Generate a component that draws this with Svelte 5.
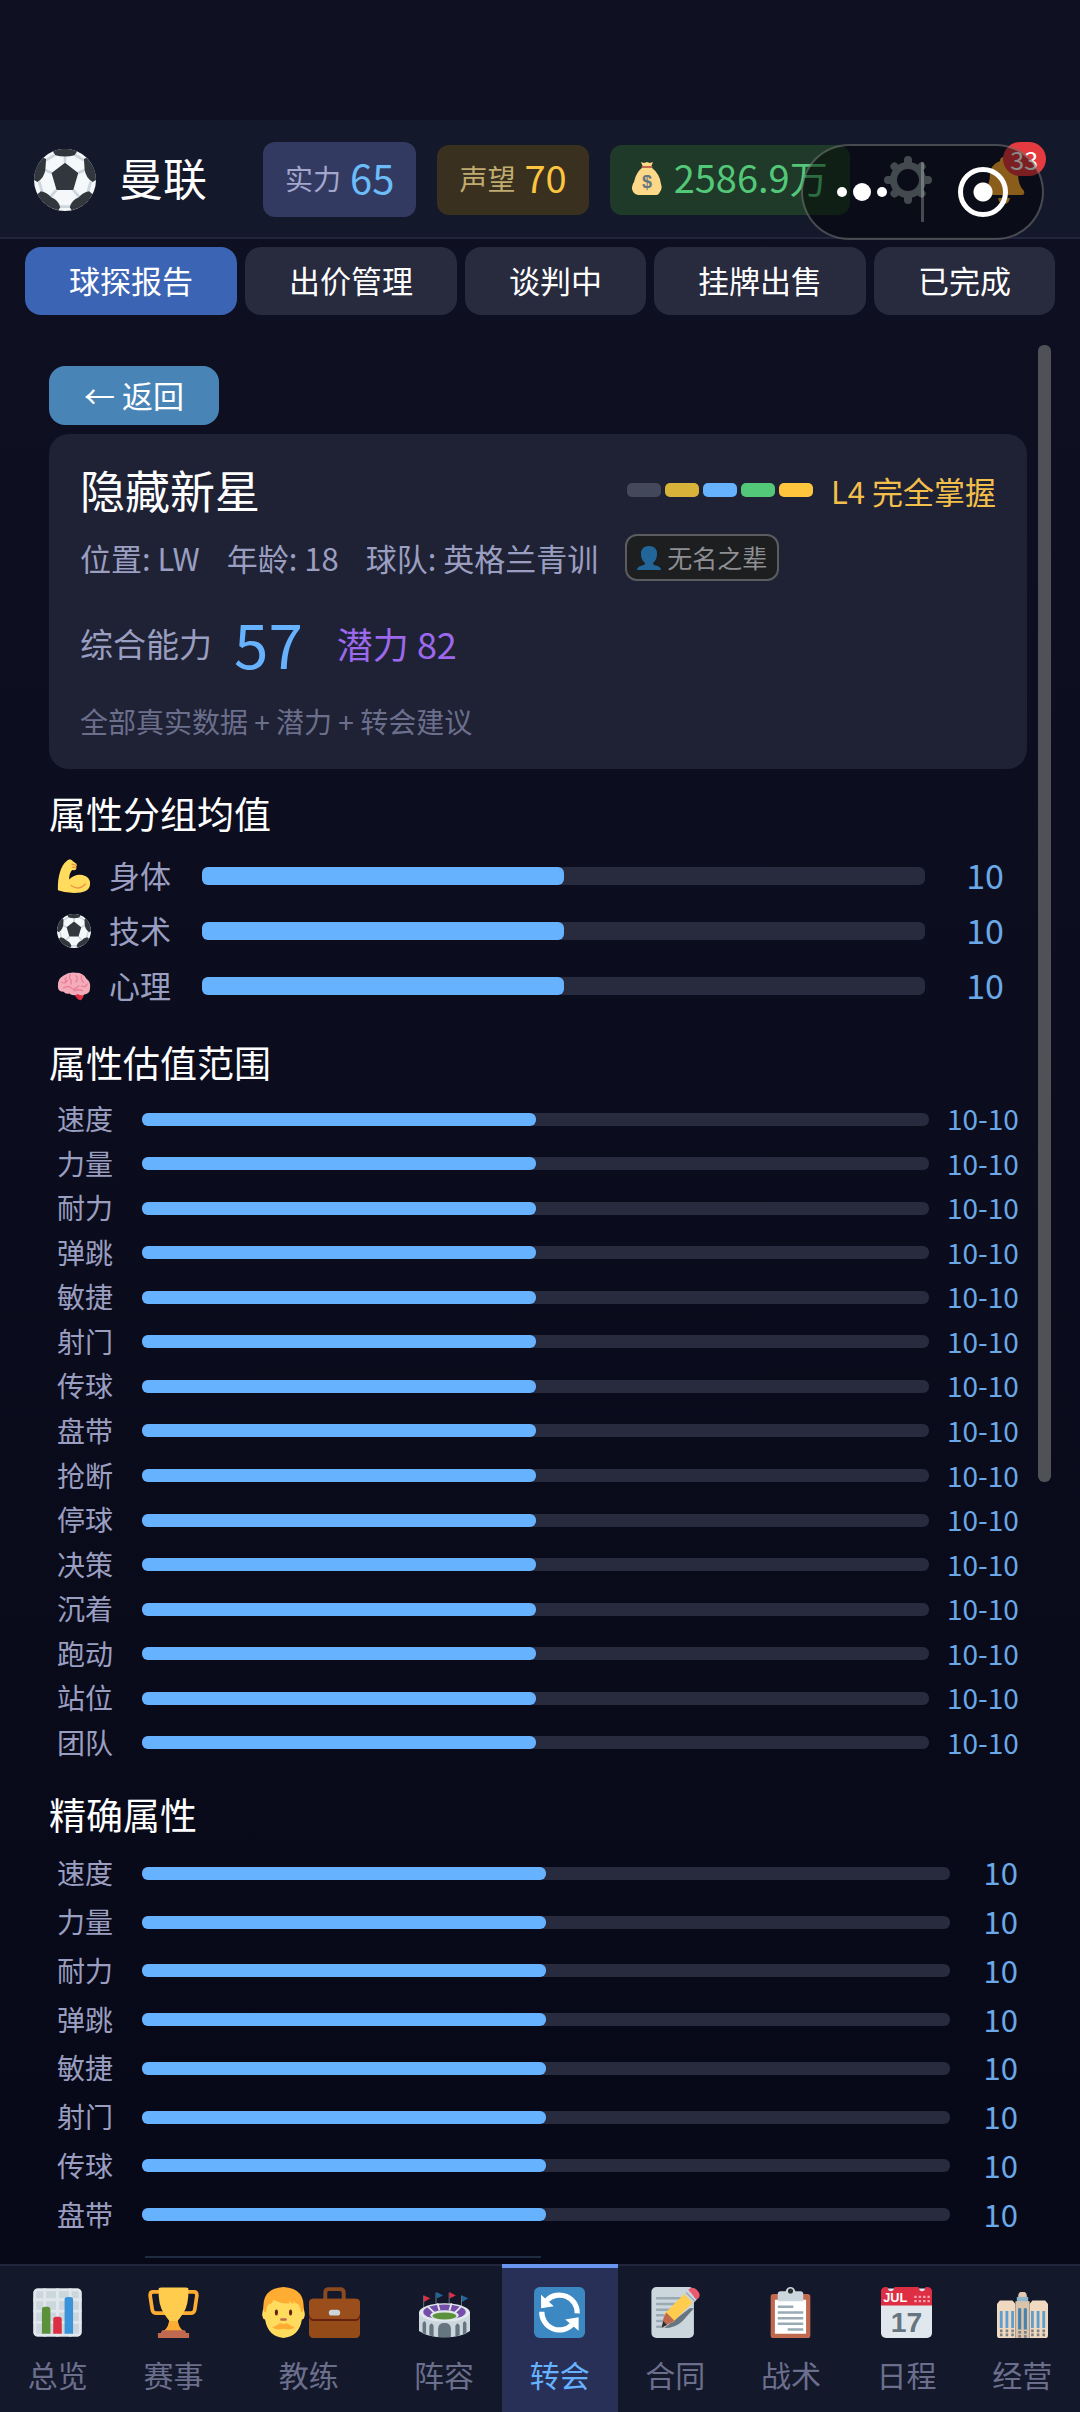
<script lang="ts">
  type IconName =
    | 'ball'
    | 'muscle'
    | 'brain'
    | 'chart'
    | 'trophy'
    | 'man'
    | 'briefcase'
    | 'stadium'
    | 'refresh'
    | 'memo'
    | 'clipboard'
    | 'calendar'
    | 'building';

  const tabs = ['球探报告', '出价管理', '谈判中', '挂牌出售', '已完成'];
  let activeTab = $state('球探报告');

  const levels = ['#43485a', '#d9b23a', '#66b2ff', '#52c878', '#ffc53d'];

  const groups: { icon: IconName; name: string; value: number }[] = [
    { icon: 'muscle', name: '身体', value: 10 },
    { icon: 'ball', name: '技术', value: 10 },
    { icon: 'brain', name: '心理', value: 10 }
  ];

  const attributes = [
    '速度', '力量', '耐力', '弹跳', '敏捷', '射门', '传球', '盘带',
    '抢断', '停球', '决策', '沉着', '跑动', '站位', '团队'
  ];
  const ranges = attributes.map((name) => ({ name, low: 10, high: 10 }));
  const exact = attributes.slice(0, 8).map((name) => ({ name, value: 10 }));

  const nav: { label: string; icons: IconName[] }[] = [
    { label: '总览', icons: ['chart'] },
    { label: '赛事', icons: ['trophy'] },
    { label: '教练', icons: ['man', 'briefcase'] },
    { label: '阵容', icons: ['stadium'] },
    { label: '转会', icons: ['refresh'] },
    { label: '合同', icons: ['memo'] },
    { label: '战术', icons: ['clipboard'] },
    { label: '日程', icons: ['calendar'] },
    { label: '经营', icons: ['building'] }
  ];
  let activeNav = $state('转会');

  const MAX = 20;
  const pct = (v: number) => (v / MAX) * 100;
</script>

{#snippet icon(name: IconName)}
  <svg class="icon" viewBox="0 0 36 36" aria-hidden="true">
    {#if name === 'ball'}
      <circle cx="18" cy="18" r="18" fill="#f5f8fa" />
      <path
        d="M18 8V4M25.6 14l4.2-2M22.800 23.800l3.500 4.200M13 23.800l-3.500 4.200M10.300 14l-4.200-2M13.500 33.500h9M33 19l-1.800 6M3 19l1.800 6M24 3.500l5 3M12 3.500l-5 3"
        stroke="#ccd6dd"
        stroke-width="1.600"
        fill="none"
      />
      <g fill="#31373d">
        <path d="M18 8l7.700 5.900-2.900 9.900H13.100L10.200 13.900z" />
        <path d="M11 1.400A18 18 0 0125 1.400L23.600 3.600Q18 5.200 12.400 3.600z" />
        <path d="M29 5.800l1.500-.7A18 18 0 0136 18l-2 1.200q-4-2.700-4.600-7.200z" />
        <path d="M7 5.800l-1.500-.7A18 18 0 000 18l2 1.200q4-2.700 4.600-7.200z" />
        <path d="M32 24.500l2 1.800A18 18 0 0121.800 35.600l-1-1.800q.8-4 5.200-5.800 2.500-3 6-3.500z" />
        <path d="M4 24.500l-2 1.800A18 18 0 0014.200 35.600l1-1.800q-.8-4-5.200-5.800-2.500-3-6-3.500z" />
      </g>
    {:else if name === 'muscle'}
      <path
        d="M1 33C.5 22 3 8 10 2.500 12-.2 15-.2 16.500 2l4 3q1 2-.5 3.500l.5 2q-1 1.600-4.500 1.200-3 3.300-3.300 10Q19 15.500 27 17q8.500 2 8 10-.8 9-17 9-9 0-17-3z"
        fill="#ffdc5d"
      />
      <path d="M15 28q8 6 15-1.500M16 5.500l4 1M16.500 8.800l3.500.2" stroke="#ef9645" stroke-width="1.500" fill="none" stroke-linecap="round" />
    {:else if name === 'brain'}
      <path d="M18 26q4-3 11-1-1 7-4 8-4 0-7-7z" fill="#dd2e44" />
      <path
        d="M1 19Q0 11 7 7 13 2.500 20 4q8 0 11 6 5 4 4 10 0 6-6 7-4 2-7-.5-5 3-9-.5-4 1-6-2-6 0-6-5z"
        fill="#f4abba"
      />
      <path
        d="M5 14q4 2 6-2M14 6q-2 4 1 6v4M20 7q3 3 0 7M26 7q-1 4 2 7M7 20q5-3 8 0t8-2M18 23q5-2 9 0M26 18q4 2 6-2M10 9q-2 1-1 4"
        stroke="#ea7f9a"
        stroke-width="1.400"
        fill="none"
        stroke-linecap="round"
      />
    {:else if name === 'chart'}
      <rect x="1" y="1" width="34" height="34" rx="3" fill="#ccd6dd" />
      <path d="M1 9h34M1 17h34M1 25h34M9 1v34M18 1v34M27 1v34" stroke="#e1e8ed" stroke-width="2" />
      <rect x="2" y="2" width="32" height="32" rx="2" fill="none" stroke="#e1e8ed" stroke-width="2" />
      <path d="M7 33V16q0-2 2-2h2q2 0 2 2v17z" fill="#5c913b" />
      <path d="M15 33V23q0-2 2-2h2q2 0 2 2v10z" fill="#dd2e44" />
      <path d="M23 33V9q0-2 2-2h2q2 0 2 2v24z" fill="#3b94d9" />
    {:else if name === 'trophy'}
      <path d="M9 3.500H3.500q-2 0-2 2.500L3 16q.4 2.500 3 2.500h6M27 3.500h5.500q2 0 2 2.500L33 16q-.4 2.500-3 2.500h-6" stroke="#ffac33" stroke-width="2.600" fill="none" />
      <path d="M15 22h6q0 6 4 9H11q4-3 4-9z" fill="#ffac33" />
      <path d="M7.500 1Q8 .3 9.500.3h17q1.500 0 2 .7.500 12-4 18-3 4.500-4 5h-5q-1-.5-4-5-4.500-6-4-18z" fill="#ffcc4d" />
      <path d="M10 30.500h16l1 2h2V36H7v-3.500h2z" fill="#c1694f" />
    {:else if name === 'man'}
      <path d="M3.500 16q-1.600 6 1.500 7 2 12 13 13 11-1 13-13 3.100-1 1.500-7L30 8H6z" fill="#ffdc5d" />
      <path d="M4 17Q2 1 18 0 34 1 32 17l-1.500 1q-1-5-2.500-6-2-.5-3-2.500.2 2-.5 2.700L22 9.500l.3 2Q16 12 11 9q-1 3-3 3-2 1-2.500 6z" fill="#ffac33" />
      <ellipse cx="13" cy="18" rx="1.100" ry="2.100" fill="#662113" />
      <ellipse cx="23" cy="18" rx="1.100" ry="2.100" fill="#662113" />
      <path d="M16.500 23h3" stroke="#c1694f" stroke-width="1.800" stroke-linecap="round" />
      <path d="M18 26.500q1.800-1.700 4 0t4 1.700q-2 2.600-8 1.300-6 1.300-8-1.300 1.800 0 4-1.700t4 0z" fill="#ffac33" />
    {:else if name === 'briefcase'}
      <path d="M11.500 9V4q0-2.500 2.500-2.500h8q2.500 0 2.500 2.500v5" stroke="#8a4b20" stroke-width="2.800" fill="none" />
      <rect y="8.300" width="36" height="27.700" rx="3" fill="#954b18" />
      <path d="M0 19v2.500q1 2.500 3 2.500h30q2 0 3-2.500V19z" fill="#662113" />
      <path d="M0 11.300q0-3 3-3h30q3 0 3 3V19q-1 3.500-3 3.500H3q-2 0-3-3.500z" fill="#9a4e1c" />
      <rect x="14" y="16" width="8" height="4.200" rx="2.100" fill="#ccd6dd" />
    {:else if name === 'stadium'}
      <path d="M3.300 6v12M12 4v10M21.300 4v10M30 6v12" stroke="#66757f" stroke-width=".7" />
      <path d="M3.500 6l4.500 2-4.500 2.500zM21.500 3.500L26 6l-4.500 2.200z" fill="#dd2e44" />
      <path d="M12.300 3.500L17 6l-4.700 2.200zM30.300 6l4.500 2-4.500 2.500z" fill="#226699" />
      <path d="M0 18v13q6 4.500 18 4.500T36 31V18z" fill="#ccd6dd" />
      <ellipse cx="18" cy="18" rx="18" ry="6.500" fill="#e1e8ed" />
      <ellipse cx="18" cy="17.600" rx="15" ry="5.300" fill="#744eaa" />
      <path d="M13 11.500l1.500 5M23 11.500l-1.500 5M6 13.500l5 5M30 13.500l-5 5" stroke="#e1e8ed" stroke-width="1.300" />
      <ellipse cx="18" cy="20" rx="10" ry="3.600" fill="#e1e8ed" />
      <ellipse cx="18" cy="20.500" rx="8.500" ry="2.500" fill="#5c913b" />
      <path
        d="M13.500 35.400v-6q0-4 4.500-4t4.500 4v6zM7.300 34.300v-7q1.500-3 3 0v7.500zM25.700 34.800v-7.500q1.500-3 3 0v7zM2.500 32.500v-7q1.500-2.500 2.500 0v8zM31 33.500v-8q1-2.500 2.500 0v7z"
        fill="#66757f"
      />
    {:else if name === 'refresh'}
      <rect width="36" height="36" rx="4" fill="#3b88c3" />
      <path d="M30.500 18.600A12.500 12.500 0 009 9.500M5.500 17.500A12.500 12.500 0 0027 26.500" stroke="#fff" stroke-width="3.700" fill="none" />
      <path d="M5 5.500v9.500l9-1.500zM31.500 30.800V21.300l-9.500 1.700z" fill="#fff" />
    {:else if name === 'memo'}
      <rect x="1" width="30" height="36" rx="3.500" fill="#ccd6dd" />
      <path d="M5 8h19M5 12h17M5 16h14M5 20h10M5 24h6M5 28h4" stroke="#99aab5" stroke-width="1.800" stroke-linecap="round" />
      <path d="M10 29q8 0 13-5l8-9-3 0z" fill="#66757f" />
      <path d="M25.500 3.500l6 6L16 25l-6-6z" fill="#ffcc4d" />
      <path d="M11.500 18l5.800 5.800L8.500 28.500 9.500 22z" fill="#c1694f" />
      <path d="M9.300 24L8.300 28.500l3.700-1.700z" fill="#292f33" />
      <path d="M24 5l2.600-2.600 6.500 6.500L30.500 11.500z" fill="#ccd6dd" />
      <path d="M27 2q3-3 6 0t1.500 5.500L33 9z" fill="#ea596e" />
      <path d="M25.500 3.800l6 6" stroke="#99aab5" stroke-width="1" />
    {:else if name === 'clipboard'}
      <rect x="4" y="5" width="28" height="31" rx="2" fill="#c1694f" />
      <path d="M7 9h22v24H7z" fill="#fff" />
      <path d="M9 5q0-2 2-2h3.500Q15.500 0 18 0t3.500 3H25q2 0 2 2v5H9z" fill="#ccd6dd" />
      <circle cx="18" cy="2.800" r="1.800" fill="#292f33" />
      <path d="M9 14h11M9 18h18M9 22h18M9 26h18M16 30h11" stroke="#99aab5" stroke-width="1.800" />
    {:else if name === 'calendar'}
      <rect y="1" width="36" height="35" rx="3.500" fill="#e1e8ed" />
      <path d="M0 13V3.500Q0 0 3.500 0h1q.5 3 2.500 3t2.500-3h17q.5 3 2.500 3t2.500-3h1Q36 0 36 3.500V13z" fill="#dd2e44" />
      <text x="1.500" y="10.800" font-size="9" font-weight="700" fill="#fff">JUL</text>
      <path d="M23.500 7h11M23.500 10h11" stroke="#f4a3ae" stroke-width="1.700" stroke-dasharray="1.700 1.400" />
      <text x="18" y="31.500" font-size="20" font-weight="700" text-anchor="middle" fill="#66757f">17</text>
    {:else if name === 'building'}
      <path d="M15 9V6q0-2 1.500-2.500h3Q21 4 21 6v3z" fill="#e6c7b0" />
      <path d="M14 7h8v4h-8z" fill="#8fb6cf" />
      <path d="M0 12l2-2.500h9L13 12v24H2q-2 0-2-2zM36 12l-2-2.500h-9L23 12v24h11q2 0 2-2z" fill="#efd9c0" />
      <path d="M13 10h10v26H13z" fill="#d9c3ab" />
      <path d="M3 17v12M7 17v12M11 17v12M25 17v12M29 17v12M33 17v12" stroke="#5c9fd0" stroke-width="2" />
      <path d="M16 15v15M20 15v15" stroke="#4683ad" stroke-width="2.200" />
      <path d="M3 30v5M7 30v5M11 30v5M16 31v5M20 31v5M25 30v5M29 30v5M33 30v5" stroke="#7d7f80" stroke-width="1.800" stroke-dasharray="2 .8" />
    {/if}
  </svg>
{/snippet}

<div class="page">
  <header>
    <div class="crest">{@render icon('ball')}</div>
    <h1>曼联</h1>
    <div class="chips">
      <div class="chip power"><span>实力</span><b>65</b></div>
      <div class="chip fame"><span>声望</span><b>70</b></div>
      <div class="chip money">
        <svg viewBox="0 0 30 34" aria-hidden="true">
          <path
            d="M9 1l3 1 3-1 3 1 3-1-2 5q9 7 10 17 2 5-2 9.500-1 1.500-3 1.500H6q-5-1-6-6-.3-4 2-7Q4 11 11 6z"
            fill="#fdd888"
          />
          <path d="M10.500 6h9" stroke="#bf6952" stroke-width="2" stroke-linecap="round" />
          <text x="15" y="27" font-size="18" font-weight="700" text-anchor="middle" fill="#67757f">$</text>
        </svg>
        <b>2586.9万</b>
      </div>
    </div>
    <button type="button" class="tool" aria-label="设置">
      <svg viewBox="0 0 48 48">
        <g stroke="#7d8a92" stroke-width="8" stroke-linecap="round">
          <path d="M24 4v8M24 36v8M4 24h8M36 24h8M10.500 10.500l5 5M32.500 32.500l5 5M10.500 37.500l5-5M32.500 15.500l5-5" />
        </g>
        <circle cx="24" cy="24" r="14.500" fill="#14182b" stroke="#7d8a92" stroke-width="7" />
      </svg>
    </button>
    <button type="button" class="tool bell" aria-label="通知">
      <svg viewBox="0 0 48 48">
        <path d="M24 1q4 0 4 4 9 3 10 13 0 11 6 17 1 4-2 4H6q-3 0-2-4 6-6 6-17 1-10 10-13 0-4 4-4z" fill="#ffac33" />
        <path d="M18 42h12q-1 6-6 6t-6-6z" fill="#ffac33" />
      </svg>
      <span class="badge">33</span>
    </button>
    <div class="capsule">
      <button type="button" class="more" aria-label="更多"><i></i><i class="big"></i><i></i></button>
      <button type="button" class="close" aria-label="关闭"><i></i></button>
    </div>
  </header>

  <div class="tabs">
    {#each tabs as tab (tab)}
      <button type="button" class:active={tab === activeTab} onclick={() => (activeTab = tab)}>{tab}</button>
    {/each}
  </div>

  <div class="body">
    <main>
      <button type="button" class="back">← 返回</button>

      <section class="card">
        <div class="card-head">
          <h2>隐藏新星</h2>
          <div class="level">
            <div class="segments">
              {#each levels as color (color)}
                <i style="background: {color}"></i>
              {/each}
            </div>
            <span>L4 完全掌握</span>
          </div>
        </div>
        <div class="meta">
          <span>位置: LW</span>
          <span>年龄: 18</span>
          <span>球队: 英格兰青训</span>
          <span class="tag">
            <svg viewBox="0 0 24 24" aria-hidden="true">
              <path d="M12 0q8 0 8 8 0 6-4 9 0 2 3 2.500 5 1 5 4.500H0q0-3.500 5-4.500 3-.5 3-2.500-4-3-4-9 0-8 8-8z" fill="#269" />
            </svg>
            无名之辈
          </span>
        </div>
        <div class="ability">
          <span>综合能力</span>
          <strong>57</strong>
          <em>潜力 82</em>
        </div>
        <p>全部真实数据 + 潜力 + 转会建议</p>
      </section>

      <h3>属性分组均值</h3>
      <div class="rows groups">
        {#each groups as g (g.name)}
          <div class="row">
            {@render icon(g.icon)}
            <span class="name">{g.name}</span>
            <div class="track"><div class="fill" style="width: {pct(g.value)}%"></div></div>
            <span class="value">{g.value}</span>
          </div>
        {/each}
      </div>

      <h3 class="spaced">属性估值范围</h3>
      <div class="rows ranges">
        {#each ranges as r (r.name)}
          <div class="row">
            <span class="name">{r.name}</span>
            <div class="track"><div class="fill" style="width: {pct(r.high)}%"></div></div>
            <span class="value">{r.low}-{r.high}</span>
          </div>
        {/each}
      </div>

      <h3 class="spaced">精确属性</h3>
      <div class="rows exact">
        {#each exact as a (a.name)}
          <div class="row">
            <span class="name">{a.name}</span>
            <div class="track"><div class="fill" style="width: {pct(a.value)}%"></div></div>
            <span class="value">{a.value}</span>
          </div>
        {/each}
      </div>
      <!-- top edge of the next row, cut by the scroll area -->
      <div class="next"></div>
    </main>
    <div class="thumb"></div>
  </div>

  <nav>
    {#each nav as item (item.label)}
      <a
        href="#{item.label}"
        class:wide={item.icons.length > 1}
        class:active={item.label === activeNav}
        onclick={() => (activeNav = item.label)}
      >
        <span class="icons">
          {#each item.icons as name (name)}
            {@render icon(name)}
          {/each}
        </span>
        {item.label}
      </a>
    {/each}
  </nav>
</div>

<style>
  :global(body) {
    margin: 0;
    background: #080a18;
  }
  .page {
    box-sizing: border-box;
    height: 100vh;
    padding-top: 120px;
    display: flex;
    flex-direction: column;
    overflow: hidden;
    background: linear-gradient(#0f1021, #0c0e1f 35%, #060817);
    color: #fff;
    font-family: 'Noto Sans CJK SC', 'Noto Sans', sans-serif;
    font-size: 31px;
  }
  button {
    border: 0;
    padding: 0;
    background: none;
    color: inherit;
    font: inherit;
    cursor: pointer;
  }
  h1,
  h2,
  h3,
  p {
    margin: 0;
    font-weight: 400;
  }
  b,
  strong,
  em {
    font-weight: 400;
    font-style: normal;
  }
  i,
  svg {
    display: block;
  }
  svg text {
    font-family: 'Liberation Sans', sans-serif;
  }

  header {
    position: relative;
    display: flex;
    align-items: center;
    padding: 22px 34px 20px;
    border-bottom: 2px solid #22263c;
    background: #14182b;
  }
  .crest {
    width: 62px;
    margin-right: 23px;
  }
  h1 {
    padding-bottom: 6px;
    font-size: 44px;
    line-height: 60px;
    margin-right: 56px;
  }
  .chips {
    display: flex;
    align-items: center;
    gap: 21px;
    margin-right: 34px;
  }
  .chip {
    box-sizing: border-box;
    display: flex;
    align-items: center;
    gap: 9px;
    height: 70px;
    padding: 0 22px 4px;
    border-radius: 12px;
    font-size: 28px;
    line-height: 40px;
    white-space: nowrap;
  }
  .chip b {
    padding-bottom: 2px;
    font-size: 38px;
  }
  .power {
    height: 75px;
    background: #323a62;
    color: #a3a7cc;
  }
  .power b {
    font-size: 40px;
    color: #6bbcf9;
  }
  .fame {
    background: #3a301f;
    color: #c0ac70;
  }
  .fame b {
    color: #fbc540;
  }
  .money {
    gap: 12px;
    background: #1f3a29;
    color: #52c878;
  }
  .money svg {
    width: 30px;
  }
  .tool {
    position: relative;
    width: 48px;
    margin-right: 48px;
  }
  .bell {
    margin-right: 0;
  }
  .badge {
    position: absolute;
    top: -14px;
    right: -18px;
    min-width: 43px;
    border-radius: 17px;
    background: #e53a40;
    color: #fff;
    font-size: 25px;
    line-height: 34px;
    text-align: center;
  }
  .capsule {
    position: absolute;
    top: 24px;
    right: 36px;
    box-sizing: border-box;
    width: 243px;
    height: 96px;
    display: flex;
    align-items: center;
    border: 2px solid rgba(255, 255, 255, 0.25);
    border-radius: 48px;
    background: rgba(0, 0, 0, 0.46);
  }
  .more {
    display: flex;
    align-items: center;
    justify-content: center;
    gap: 6px;
    flex: 1;
    height: 60px;
    border-right: 3px solid rgba(255, 255, 255, 0.25);
  }
  .more i {
    width: 10px;
    height: 10px;
    border-radius: 50%;
    background: #fff;
  }
  .more .big {
    width: 18px;
    height: 18px;
  }
  .close {
    display: flex;
    flex: 1;
    justify-content: center;
  }
  .close i {
    width: 40px;
    height: 40px;
    border: 5px solid #fff;
    border-radius: 50%;
    background: radial-gradient(circle, #fff 9px, transparent 10px);
  }

  .tabs {
    display: flex;
    gap: 8px;
    padding: 8px 25px 16px;
  }
  .tabs button {
    flex: 1 1 auto;
    padding: 14px 40px 16px;
    border-radius: 16px;
    background: #282a3e;
    line-height: 38px;
    white-space: nowrap;
  }
  .tabs .active {
    background: #3c64b4;
  }

  .body {
    position: relative;
    flex: 1;
    min-height: 0;
    margin-bottom: 6px;
    overflow: hidden;
  }
  .thumb {
    position: absolute;
    top: 14px;
    right: 29px;
    width: 13px;
    height: 59%;
    border-radius: 6px;
    background: #505157;
  }
  main {
    padding: 35px 53px 0 49px;
  }
  .back {
    display: block;
    padding: 9px 35px 11px;
    margin-bottom: 9px;
    border-radius: 16px;
    background: #4984b7;
    line-height: 39px;
  }
  .card {
    padding: 26px 31px 28px;
    border-radius: 20px;
    background: #1f2235;
  }
  .card-head,
  .level,
  .meta {
    display: flex;
    align-items: center;
  }
  .card-head {
    justify-content: space-between;
    margin-bottom: 14px;
  }
  h2 {
    font-size: 45px;
    line-height: 60px;
  }
  .level {
    gap: 18px;
    color: #f3bf4b;
  }
  .segments {
    display: flex;
    gap: 4px;
  }
  .segments i {
    width: 34px;
    height: 14px;
    border-radius: 5px;
  }
  .meta {
    gap: 27px;
    margin-bottom: 26px;
    color: #9a9ec0;
  }
  .tag {
    display: flex;
    align-items: center;
    gap: 6px;
    padding: 0 10px;
    border: 2px solid #5b5c60;
    border-radius: 12px;
    background: #1d1e20;
    color: #8e8f93;
    font-size: 25px;
    line-height: 43px;
  }
  .tag svg {
    width: 24px;
  }
  .ability {
    display: flex;
    align-items: center;
    gap: 22px;
    margin-bottom: 22px;
    color: #9a9ec0;
    font-size: 33px;
    line-height: 72px;
  }
  .ability strong {
    margin-right: 12px;
    padding-bottom: 2px;
    color: #66b2ff;
    font-size: 62px;
    line-height: 70px;
  }
  .ability em {
    color: #9d69ec;
    font-size: 36px;
  }
  .card p {
    color: #6b6f8c;
    font-size: 28px;
    line-height: 40px;
  }

  h3 {
    margin: 18px 0 9px;
    font-size: 37px;
    line-height: 52px;
  }
  h3.spaced {
    margin-top: 23px;
  }
  .rows {
    display: grid;
    grid-auto-rows: 1fr;
    padding-left: 8px;
    color: #9a9ec0;
    font-size: 28px;
    line-height: 36px;
  }
  .row {
    display: grid;
    align-items: center;
    column-gap: 18px;
  }
  .name,
  .value {
    padding-bottom: 2px;
  }
  .groups {
    min-height: 165px;
    font-size: 31px;
  }
  .groups .row {
    grid-template-columns: 34px 75px 1fr 84px;
  }
  .ranges {
    min-height: 668px;
    padding-right: 9px;
  }
  .ranges .row {
    grid-template-columns: 67px 1fr 71px;
  }
  .exact {
    min-height: 390px;
    padding-right: 9px;
  }
  .exact .row {
    grid-template-columns: 67px 1fr 50px;
  }
  .track {
    height: 13px;
    border-radius: 6px;
    background: #282a3d;
  }
  .fill {
    height: 100%;
    border-radius: 6px;
    background: #66b2ff;
  }
  .groups .track {
    height: 18px;
  }
  .value {
    color: #6ba8e8;
    text-align: right;
    white-space: nowrap;
  }
  .groups .value {
    font-size: 34px;
    text-align: center;
  }
  .exact .value {
    font-size: 31px;
  }
  .next {
    width: 396px;
    height: 13px;
    margin: 17px 0 0 96px;
    background: #1f2c42;
  }

  nav {
    display: flex;
    border-top: 2px solid #22263c;
    background: #14182b;
  }
  nav a {
    display: flex;
    flex-direction: column;
    align-items: center;
    flex: 1;
    gap: 13px;
    padding: 21px 0 15px;
    color: #6b6f8c;
    font-size: 30px;
    line-height: 46px;
    text-decoration: none;
  }
  nav .wide {
    flex: 0 0 155px;
  }
  nav .active {
    margin-top: -2px;
    padding-top: 19px;
    border-top: 4px solid #6b96f0;
    background: #293058;
    color: #66b2ff;
  }
  .icons {
    display: flex;
  }
  nav .icon {
    width: 51px;
    height: 51px;
  }
</style>
